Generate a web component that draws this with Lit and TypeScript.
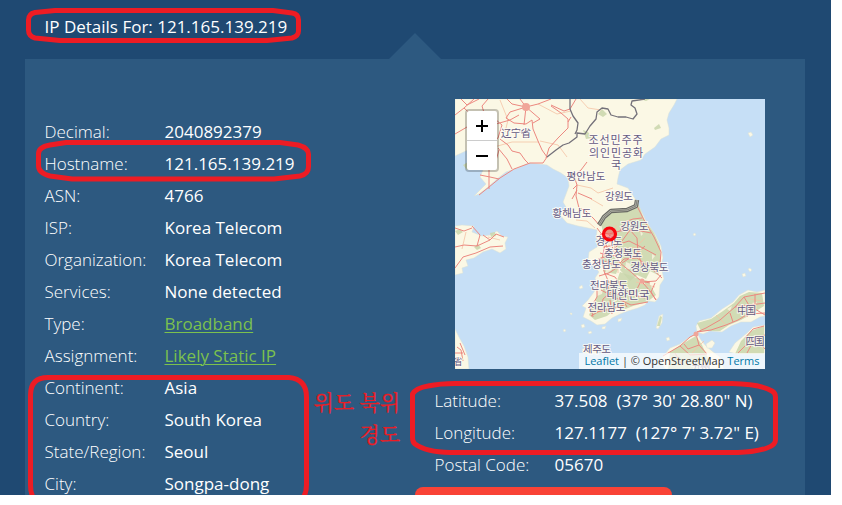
import { LitElement, html, svg, css } from "lit";
import { customElement } from "lit/decorators.js";

type Row = { label: string; value: string; link?: boolean };

const details: Row[] = [
  { label: "Decimal:", value: "2040892379" },
  { label: "Hostname:", value: "121.165.139.219" },
  { label: "ASN:", value: "4766" },
  { label: "ISP:", value: "Korea Telecom" },
  { label: "Organization:", value: "Korea Telecom" },
  { label: "Services:", value: "None detected" },
  { label: "Type:", value: "Broadband", link: true },
  { label: "Assignment:", value: "Likely Static IP", link: true },
  { label: "Continent:", value: "Asia" },
  { label: "Country:", value: "South Korea" },
  { label: "State/Region:", value: "Seoul" },
  { label: "City:", value: "Songpa-dong" },
];

const position: Row[] = [
  { label: "Latitude:", value: "37.508\u00a0 (37° 30' 28.80\" N)" },
  { label: "Longitude:", value: "127.1177\u00a0 (127° 7' 3.72\" E)" },
  { label: "Postal Code:", value: "05670" },
];

const land = [
  // Liaodong and the Korean peninsula
  "M455 99H677L674 105 669 113 667 120 669 128 669 135 661 139 655 147 645 154 641 160 628 164 620 170 618 178 617 184 628 188 636 200 640 208 645 219 650 227 655 234 661 246 663 258 661 266 663 275 664 279 660 285 659 297 655 302 648 301 645 305 638 308 628 311 620 314 612 318 605 324 597 325 591 321 583 317 586 308 582 306 588 300 594 292 597 285 595 278 599 272 594 266 588 260 589 252 597 247 601 241 596 239 597 230 588 228 578 226 567 223 559 214 567 209 563 202 566 194 569 186 568 178 561 173 553 169 547 165 539 164 529 163 518 168 506 172 497 179 487 188 479 194 474 196 481 189 486 184 480 177 483 170 478 158 468 150 455 156Z",
  // Shandong
  "M455 226L462 225 474 226 472 232 482 236 490 235 497 231 502 236 508 237 505 243 506 249 500 253 492 249 483 252 474 258 466 260 468 266 462 268 463 273 455 275Z",
  "M455 329L459 337 464 346 468 357 469 369H455Z",
  // western Japan
  "M765 290L757 292 748 290 739 295 733 302 722 309 711 318 699 321 696 326 697 332 703 334 710 331 722 332 731 326 741 322 751 322 760 317 765 316Z",
  "M765 325L753 327 747 333 741 338 735 343 729 352 737 354 765 354Z",
  "M697 333L688 338 680 344 670 348 665 354 660 360 665 369H724L720 357 712 351 706 346 701 340Z",
  "M706 344l3-2 3-2 3 3-3 5-5 0z",
  "M656 328l3-12 4-2-1 9-4 6z",
  "M748 133l3-1 2 3-3 2z",
  "M742 274l3-1 1 3-3 1zM748 269l2-1 2 2-2 2z",
  "M693 234l2-1 1 2-2 1z",
  "M666 338l3-1 1 3-3 1z",
  "M582 349l12-4 10 4-8 5-13-1z",
  "M579 287l3-2 1 3-3 1zM581 325l3-1 1 3-3 1zM588 332l3-1 1 2-3 1zM602 327l4-1-1 3-3 0zM618 319l4-1-1 3-3 1zM570 313l2 0 0 2-2-1zM563 330l2-1 1 2-2 1z",
];

const forest = [
  "M601 224L612 211 626 211 638 203 644 219 654 233 660 246 661 265 658 275 650 271 646 279 637 275 630 281 620 270 622 255 612 248 615 238 603 232Z",
  "M620 272l14 5 14 4 8 14-9 7-14 4-10 4-6-6-4-12zM600 286l12-6 9 12-4 16-10 8-12 4-6-5 6-13z",
  "M600 258l10-6 10 12-4 10-12-2z",
  "M697 323L711 319 723 311 734 303 740 296 749 292 762 293 764 306 750 315 741 320 729 325 720 331 701 331Z",
  "M741 341l10-10 13-5V354H735ZM670 352l12-8 14-8 6 9 4 9 4 8-8 7h-34z",
  "M657 326l3-10 2 1-2 9z",
  "M598 114l4-5 5 5-4 3zM654 128l5-4 2 4-6 2zM583 130l5 2 4 6-6 1zM463 165l5-3 4 5-5 3z",
  "M455 231l5-2 3 3-5 3zM474 247l4-3 3 4-4 2zM490 233l5-1 1 4-5 1zM640 99h10l-4 2z",
];

const clearings = [
  "M608 240l7-3 3 7-5 5-5-2zM605 265l5-2 2 7-6 3zM598 288l6-3-2 9-5 2zM626 262l5 2-1 5-5 0zM639 279l5 0 1 5-5 0z",
  "M640 230l3 4-2 2zM652 254l3 2-3 4zM618 289l4 1-1 4-4 0zM635 293l5-1 0 4-5 1zM727 309l5-3-2 5zM752 303l5-1-2 4z",
];

const roads = [
  "M455 134L467 127 475 118 464 108 455 115M464 108L474 99M461 99l6 6 12-6M488 99l-6 7 6 20 8-2 14-4 9-5",
  "M520 99L526 107 538 104 551 99M526 107L510 112 506 118 514 123 526 124 532 120 533 129 538 141 542 150 547 157",
  "M526 107L512 104 507 99M526 107L540 119 533 123M551 106L561 113 568 119 568 128 558 138 549 148 546 158",
  "M500 139L508 145 512 151 520 153 525 160 529 164M498 148L507 159 512 169M479 195L489 187 500 178 514 169 530 163 543 163 547 157",
  "M489 189V170L495 164 499 150M480 175L490 177 499 179M495 119l7 6-4 13-7 5M551 105l13 6 6-2 6-10M568 122l3-5M526 107l-2 18",
  "M587 162L581 170 574 176 577 185 576 196 579 208 586 211 594 219 600 226M577 190l-5 9M577 185l-4 4M578 193l14 6",
  "M455 247L464 245 477 246 490 240 496 234 504 237M455 268L463 257 476 253 490 247 503 246M455 228L464 231 472 228M477 246L480 235 472 226M490 240L483 235",
  "M609 234L620 231 630 230 641 231 651 233M620 231L625 222 633 219 642 218M630 230L637 238 638 253 642 265M610 235L605 245 602 259 604 271 609 283 607 298",
  "M610 235L613 250 620 263 631 272 641 281 650 283M603 247L616 245 629 241 641 247 656 255M604 261L617 266 624 259 637 258 651 268 662 278",
  "M604 273L615 277 622 287 630 294 645 298M601 290L616 298 631 305 648 302M597 312L611 309 624 305M591 316L601 310 603 299 612 291 620 296M641 281L636 291 629 297M642 282L656 281 661 275M643 283L650 291 656 300M613 251L605 257 598 259M622 263L636 254 645 246M600 253l10 3 11-1M630 230l-8 11-8 8",
  "M637 206l7 14 10 17 7 15-1 12M596 238l7-5 6 1M597 228l6 8 5 14M599 276l10-3 12-8M597 285v12l-6 10 2 10M610 300l2 14M655 283l-4 9 5 8M621 297l6 10",
  "M697 332L706 328 720 320 735 307 744 297 765 293M697 332L711 330 726 325 738 320 748 314 765 313M730 313L733 322M744 297L750 307 747 317M755 294V309L765 315M765 303L743 306 735 307",
  "M663 356L680 346 690 337 696 334 699 345 707 354M680 346L690 355 707 354M675 353L682 365M699 345L688 349 684 344M738 353L750 341 765 335M747 353L755 338 765 349M745 338l8-9 11-3",
  "M457 347l4 3 2 11M455 353h8M460 343l5 12",
];

const minorRoads = [
  "M500 100l8 20-3 12M538 104l19 10 14-3M580 99l8 9 13 2M540 141l18 4 9 12M487 149l25-7 27 0M618 142l-2 12M577 185l14 3 7 5 15-5M591 199l12 7M466 232l-4 17M500 240l-12-3",
  "M595 228l-8-7-11-1M616 225l-2 20 4 9 0 19M645 238l-9 9-15 2M636 282l19 5M606 286l20-2M716 315l10 10M750 299l12 2M704 341l-12 12",
];

const places: [number, number, string, number, number][] = [
  [516, 137, "辽宁省", 10.5, 30],
  [615.5, 144, "조선민주주", 11, 54],
  [616, 157, "의인민공화", 11, 54],
  [616, 169, "국", 11, 10],
  [586, 179.500, "평안남도", 10.5, 39],
  [619, 200, "강원도", 10.5, 28],
  [572, 217, "황해남도", 10.5, 39],
  [634.5, 230, "강원도", 10.5, 28],
  [609, 245, "경기도", 10.5, 27],
  [623, 257, "충청북도", 10.5, 38],
  [601.5, 268, "충청남도", 10.5, 39],
  [649.5, 270.500, "경상북도", 10.5, 38],
  [609, 288.500, "전라북도", 10.5, 38],
  [628, 299, "대한민국", 11.5, 43],
  [606.5, 311, "전라남도", 10.5, 38],
  [597, 353, "제주도", 10.5, 28],
  [746.5, 313.500, "中国", 10.5, 19],
  [755, 345, "四国", 10.5, 19],
  [458, 365, "省", 9, 9],
  [701, 371, "九州", 10.5, 19],
];

@customElement("location-map")
export class LocationMap extends LitElement {
  static styles = css`
    :host { display: block; position: relative; width: 310px; height: 270px; overflow: hidden; background: #c6dff6; }
    .tiles { display: block; width: 310px; height: 270px; }
    .land { fill: #fbf8e5; stroke: #d9e0d6; stroke-width: 0.5; }
    .forest { fill: #c9d6ab; opacity: 0.85; }
    .clearing { fill: #f3efd9; }
    .road { fill: none; stroke: #ec8880; stroke-width: 1; stroke-linejoin: round; }
    .minor { fill: none; stroke: #f5c3a4; stroke-width: 0.8; }
    .city { fill: #f0a699; }
    .border { fill: none; stroke: #74717a; stroke-width: 1.3; stroke-linejoin: round; }
    .dmz { fill: none; stroke: #686963; stroke-width: 4.4; stroke-linejoin: round; }
    .dmz-line { fill: none; stroke: #b9baae; stroke-width: 2.2; }
    .dmz-core { fill: none; stroke: #686963; stroke-width: 0.7; }
    .place { fill: #655a82; stroke: #fffdf6; stroke-width: 2; stroke-opacity: 0.8; paint-order: stroke; text-anchor: middle; font-family: "Noto Sans CJK KR", "Noto Sans CJK SC", sans-serif; }
    .pin { fill: #f9525288; stroke: #f8050c; stroke-width: 3.2; }
    .zoom { position: absolute; left: 10px; top: 10px; width: 30px; border: 2px solid rgba(0, 0, 0, 0.22); border-radius: 4px; background: #fff; background-clip: padding-box; display: flex; flex-direction: column; }
    .step { height: 29px; display: grid; place-items: center; }
    .step + .step { border-top: 1px solid #ccc; }
    .glyph { width: 12px; height: 12px; stroke: #000; stroke-width: 2; fill: none; }
    .credit { position: absolute; right: 0; bottom: 0; height: 16px; padding: 0 5.500px 0 5px; background: rgba(255, 255, 255, 0.7); color: #333; font: 11px/16px "Open Sans", sans-serif; white-space: pre; }
    .ref { color: #0078a8; }
  `;

  render() {
    return html`
      <svg class="tiles" viewBox="455 99 310 270">
        ${land.map((d) => svg`<path class="land" d=${d}></path>`)}
        ${forest.map((d) => svg`<path class="forest" d=${d}></path>`)}
        ${clearings.map((d) => svg`<path class="clearing" d=${d}></path>`)}
        ${minorRoads.map((d) => svg`<path class="minor" d=${d}></path>`)}
        ${roads.map((d) => svg`<path class="road" d=${d}></path>`)}
        <circle class="city" cx="526" cy="107" r="4"></circle>
        <circle class="city" cx="642" cy="281" r="2.5"></circle>
        <circle class="city" cx="696" cy="334" r="2.5"></circle>
        <path class="border" d="M547 157L556 150 563 145 569 143 577 137 577 133 585 134 590 126 596 119 597 112 602 108 608 109 611 115 618 117 626 117 633 119 637 114 635 108 631 105 632 101 645 99M570 99L570 109 573 116 578 123 577 130 575 134"></path>
        <path class="dmz" d="M599 225L604 217 611 211 627 210 636 206 637 200"></path>
        <path class="dmz-line" d="M599 225L604 217 611 211 627 210 636 206 637 200"></path>
        <path class="dmz-core" d="M599 225L604 217 611 211 627 210 636 206 637 200"></path>
        ${places.map(([x, y, name, size, width]) => svg`<text class="place" x=${x} y=${y} font-size=${size} textLength=${width}>${name}</text>`)}
        <circle class="pin" cx="609.5" cy="234" r="6"></circle>
      </svg>
      <div class="zoom">
        <div class="step"><svg class="glyph" viewBox="0 0 12 12"><path d="M0 6h12M6 0v12"></path></svg></div>
        <div class="step"><svg class="glyph" viewBox="0 0 12 12"><path d="M0 6h12"></path></svg></div>
      </div>
      <div class="credit"><span class="ref">Leaflet</span> | © OpenStreetMap <span class="ref">Terms</span></div>
    `;
  }
}

@customElement("app-root")
export class AppRoot extends LitElement {
  static styles = css`
    :host { display: block; width: 842px; height: 505px; background: #fff; overflow: hidden; font: 17px/32px "Open Sans", sans-serif; color: #fff; }
    .page { position: relative; box-sizing: border-box; width: 831px; height: 495px; padding: 0 26px 0 25px; background: #1f4972; overflow: hidden; }
    .title { height: 59px; box-sizing: border-box; padding: 11px 0 0 19.500px; margin: 0; font-size: 17px; font-weight: 400; white-space: pre; }
    .panel { position: relative; height: 470px; display: grid; grid-template-columns: 390px 370px; padding-left: 20px; background: #2d5980; }
    .arrow { position: absolute; left: 364px; top: -26px; width: 52px; height: 26px; background: #2d5980; clip-path: polygon(50% 0, 100% 100%, 0 100%); }
    .facts { padding-top: 57px; margin-left: -0.5px; }
    .row { display: grid; grid-template-columns: 120px auto; height: 32px; white-space: pre; }
    .label { font-weight: 300; }
    .value { font-weight: 500; }
    .soft { font-weight: 450; }
    .link { color: #7cc14e; font-weight: 400; text-decoration: underline; text-underline-offset: 2px; text-decoration-thickness: 1px; }
    .where { padding-top: 40px; }
    .map { margin-left: 20px; }
    .coords { padding-top: 16px; margin-left: -0.5px; }
    .button { width: 257px; height: 40px; margin: 6px 0 0 -20px; border-radius: 8px; background: #f94336; }
    .marks { position: absolute; left: 0; top: 0; width: 831px; height: 495px; }
    .ring { fill: none; stroke: #ed1c24; stroke-width: 5; stroke-linejoin: round; }
    .note { fill: #ed1c24; font-family: "Noto Serif CJK KR", "Noto Sans CJK KR", serif; font-size: 21px; font-weight: 400; text-anchor: end; stroke: #ed1c24; stroke-width: 0.3; }
  `;

  private row(r: Row, tone = "value") {
    return html`<div class="row"><span class="label">${r.label}</span><span class=${r.link ? "link-cell" : tone}>${r.link ? html`<a class="link">${r.value}</a>` : r.value}</span></div>`;
  }

  render() {
    return html`
      <main class="page">
        <h1 class="title">IP Details For: 121.165.139.219</h1>
        <section class="panel">
          <div class="arrow"></div>
          <div class="facts">${details.map((r) => this.row(r))}</div>
          <div class="where">
            <location-map class="map"></location-map>
            <div class="coords">${position.map((r) => this.row(r, "soft"))}</div>
            <div class="button"></div>
          </div>
        </section>
        <svg class="marks" viewBox="0 0 831 495">
          <path class="ring" d="M55 10.5H273L292 13Q298.500 14 298.500 20V31Q298.500 36 292 38L267 40.500H60L35 38Q28.500 36 28.500 30V20Q28.500 14 35 12.500Z"></path>
          <path class="ring" d="M66 142.500H280L298 145Q308.500 148 308.500 154V167Q308.500 174 300 176L274 179H72L50 176Q38.500 173 38.500 166V154Q38.500 147 50 145Z"></path>
          <path class="ring" d="M35 500Q30.500 495 30.500 485V395Q30.500 377.500 48 377.500H289Q306.500 379 306.500 397V485Q306.500 495 301 500"></path>
          <path class="ring" d="M455 383.500H732Q760 384 772 391Q775.500 393 775.500 397V440Q775.500 445 767 448Q755 452 738 452.500H450Q426 452 415 444Q412.500 442 412.500 438V394Q416 388 428 386Q440 383.500 455 383.500Z"></path>
          <text class="note" x="400" y="410">위도 북위</text>
          <text class="note" x="400" y="442">경도</text>
        </svg>
      </main>
    `;
  }
}
